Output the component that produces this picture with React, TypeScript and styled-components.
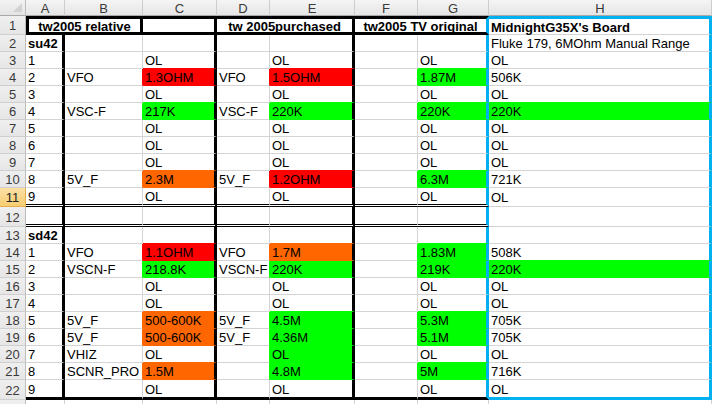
import React from 'react';
import styled, { createGlobalStyle } from 'styled-components';

const GlobalStyle = createGlobalStyle`
  html, body { margin: 0; padding: 0; background: #fff; overflow: hidden; }
  #root { width: 712px; height: 404px; overflow: hidden; }
`;

const COL_WIDTHS = [26, 39, 78, 74, 53, 85, 63, 71, 223];
const ROW_HEIGHTS = [16, 19, ...Array(9).fill(17), 19, 20, ...Array(9).fill(17), 20, 17];

const GRID_COLOR = '#d4d4d4';
const THICK = '3px solid #000';
const DOUBLE = '3px double #000';
const BLUE = '3px solid #00b0f0';
const line = (c: string) => `1px solid ${c}`;

const RED = '#ff0000';
const GRN = '#00ff00';
const ORG = '#ff6600';

type V = string | [string, string];

const OLROW = (n: string): V[] => [n, '', 'OL', '', 'OL', '', 'OL', 'OL'];

// rows 2..22, columns A..H
const DATA: V[][] = [
  ['su42', '', '', '', '', '', '', 'Fluke 179, 6MOhm Manual Range'],
  OLROW('1'),
  ['2', 'VFO', ['1.3OHM', RED], 'VFO', ['1.5OHM', RED], '', ['1.87M', GRN], '506K'],
  OLROW('3'),
  ['4', 'VSC-F', ['217K', GRN], 'VSC-F', ['220K', GRN], '', ['220K', GRN], ['220K', GRN]],
  OLROW('5'),
  OLROW('6'),
  OLROW('7'),
  ['8', '5V_F', ['2.3M', ORG], '5V_F', ['1.2OHM', RED], '', ['6.3M', GRN], '721K'],
  OLROW('9'),
  ['', '', '', '', '', '', '', ''],
  ['sd42', '', '', '', '', '', '', ''],
  ['1', 'VFO', ['1.1OHM', RED], 'VFO', ['1.7M', ORG], '', ['1.83M', GRN], '508K'],
  ['2', 'VSCN-F', ['218.8K', GRN], 'VSCN-F', ['220K', GRN], '', ['219K', GRN], ['220K', GRN]],
  OLROW('3'),
  OLROW('4'),
  ['5', '5V_F', ['500-600K', ORG], '5V_F', ['4.5M', GRN], '', ['5.3M', GRN], '705K'],
  ['6', '5V_F', ['500-600K', ORG], '5V_F', ['4.36M', GRN], '', ['5.1M', GRN], '705K'],
  ['7', 'VHIZ', 'OL', '', ['OL', GRN], '', 'OL', 'OL'],
  ['8', 'SCNR_PRO', ['1.5M', ORG], '', ['4.8M', GRN], '', ['5M', GRN], '716K'],
  OLROW('9'),
];

const BOLD_ROWS = new Set([2, 13]);

const cellAt = (r: number, c: number): V | undefined =>
  r >= 2 && r <= 22 ? DATA[r - 2][c] : undefined;
const textAt = (r: number, c: number) => {
  const v = cellAt(r, c);
  return Array.isArray(v) ? v[0] : v ?? '';
};
const fillAt = (r: number, c: number) => {
  const v = cellAt(r, c);
  return Array.isArray(v) ? v[1] : undefined;
};

const rightBorder = (r: number, c: number) => {
  if (r <= 22 && (c === 6 || c === 7)) return BLUE;
  if (r <= 22 && (c === 2 || c === 4)) return THICK;
  if (r >= 2 && r <= 22 && c === 0) return THICK;
  return line(fillAt(r, c) || fillAt(r, c + 1) || GRID_COLOR);
};

const bottomBorder = (r: number, c: number) => {
  if (r === 22) return c <= 6 ? THICK : BLUE;
  if ((r === 11 || r === 12) && c <= 6) return DOUBLE;
  return line(fillAt(r, c) || fillAt(r + 1, c) || GRID_COLOR);
};

const Sheet = styled.div`
  display: grid;
  grid-template-columns: ${COL_WIDTHS.map((w) => `${w}px`).join(' ')};
  grid-template-rows: ${ROW_HEIGHTS.map((h) => `${h}px`).join(' ')};
  width: 712px;
  font-family: 'Liberation Sans', Arial, sans-serif;
`;

const Corner = styled.div`
  box-sizing: border-box;
  display: flex;
  align-items: flex-end;
  justify-content: flex-end;
  padding: 0 3px 3px 0;
  background: linear-gradient(#f3f3f3, #e4e4e4);
  border-right: 1px solid #bdbdbd;
  border-bottom: 1px solid #a9a9a9;
`;

const ColHeader = styled.div`
  box-sizing: border-box;
  display: flex;
  align-items: center;
  justify-content: center;
  background: linear-gradient(#f5f5f5, #e5e5e5);
  border-right: 1px solid #cdcdcd;
  border-bottom: 1px solid #a9a9a9;
  font-size: 13px;
  color: #3a3a3a;
  padding-top: 1px;
`;

const RowHeader = styled.div<{ $active?: boolean }>`
  box-sizing: border-box;
  display: flex;
  align-items: center;
  justify-content: center;
  background: ${(p) => (p.$active ? 'linear-gradient(#fbe1a4, #f6cd72)' : 'linear-gradient(#efefef, #e6e6e6)')};
  border-right: 1px solid ${(p) => (p.$active ? '#e6ad4a' : '#bdbdbd')};
  border-bottom: 1px solid ${(p) => (p.$active ? '#e6ad4a' : '#cfcfcf')};
  font-size: 13px;
  color: ${(p) => (p.$active ? '#222' : '#3a3a3a')};
  padding-top: 1px;
`;

const Cell = styled.div<{
  $bg?: string;
  $bold?: boolean;
  $center?: boolean;
  $span?: number;
  $right: string;
  $bottom: string;
  $top?: string;
  $left?: string;
}>`
  box-sizing: border-box;
  grid-column: span ${(p) => p.$span ?? 1};
  display: flex;
  align-items: center;
  justify-content: ${(p) => (p.$center ? 'center' : 'flex-start')};
  padding: 1px 2px 0 2px;
  min-width: 0;
  background: ${(p) => p.$bg ?? '#fff'};
  border-right: ${(p) => p.$right};
  border-bottom: ${(p) => p.$bottom};
  border-top: ${(p) => p.$top ?? 'none'};
  border-left: ${(p) => p.$left ?? 'none'};
  font-size: 13px;
  font-weight: ${(p) => (p.$bold ? 700 : 400)};
  color: #000;
  white-space: nowrap;
  overflow: visible;
`;

const COLS = ['A', 'B', 'C', 'D', 'E', 'F', 'G', 'H'];

export default function App() {
  const rows: React.ReactNode[] = [];

  for (let r = 2; r <= 23; r++) {
    rows.push(
      <RowHeader key={`rh${r}`} $active={r === 11}>
        {r}
      </RowHeader>
    );
    for (let c = 0; c < 8; c++) {
      rows.push(
        <Cell
          key={`c${r}-${c}`}
          $bg={fillAt(r, c)}
          $bold={c === 0 && BOLD_ROWS.has(r)}
          $right={r === 23 ? line(GRID_COLOR) : rightBorder(r, c)}
          $bottom={r === 23 ? line(GRID_COLOR) : bottomBorder(r, c)}
        >
          {textAt(r, c)}
        </Cell>
      );
    }
  }

  return (
    <>
      <GlobalStyle />
      <Sheet>
        <Corner>
          <svg width="9" height="9" viewBox="0 0 9 9">
            <polygon points="9,0 9,9 0,9" fill="#d2d2d2" />
          </svg>
        </Corner>
        {COLS.map((c) => (
          <ColHeader key={c}>{c}</ColHeader>
        ))}

        <RowHeader>1</RowHeader>
        <Cell $span={2} $center $bold $top={THICK} $bottom={THICK} $left={THICK} $right={THICK}>
          tw2005 relative
        </Cell>
        <Cell $top={THICK} $bottom={THICK} $right={THICK} />
        <Cell $span={2} $center $bold $top={THICK} $bottom={THICK} $right={THICK}>
          tw 2005purchased
        </Cell>
        <Cell $span={2} $center $bold $top={THICK} $bottom={THICK} $right={BLUE}>
          tw2005 TV original
        </Cell>
        <Cell $bold $top={BLUE} $bottom={line(GRID_COLOR)} $right={BLUE}>
          MidnightG35X's Board
        </Cell>

        {rows}
      </Sheet>
    </>
  );
}
